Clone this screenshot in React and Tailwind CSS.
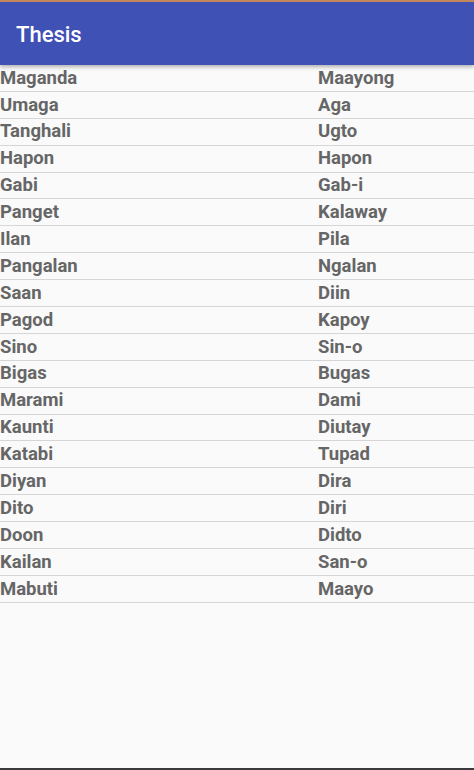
import React from 'react';

const words = [
  ['Maganda', 'Maayong'],
  ['Umaga', 'Aga'],
  ['Tanghali', 'Ugto'],
  ['Hapon', 'Hapon'],
  ['Gabi', 'Gab-i'],
  ['Panget', 'Kalaway'],
  ['Ilan', 'Pila'],
  ['Pangalan', 'Ngalan'],
  ['Saan', 'Diin'],
  ['Pagod', 'Kapoy'],
  ['Sino', 'Sin-o'],
  ['Bigas', 'Bugas'],
  ['Marami', 'Dami'],
  ['Kaunti', 'Diutay'],
  ['Katabi', 'Tupad'],
  ['Diyan', 'Dira'],
  ['Dito', 'Diri'],
  ['Doon', 'Didto'],
  ['Kailan', 'San-o'],
  ['Mabuti', 'Maayo'],
];

const App = () => {
  return (
    <div className="flex flex-col h-[770px] w-[474px] bg-[#fafafa] font-['Roboto',sans-serif] overflow-hidden">
      <div className="h-[2px] bg-[#c88a5c]" />
      <header className="relative z-10 h-[63px] bg-[#3f51b5] flex items-center px-4 pt-[2px] shadow-[0_2px_4px_rgba(0,0,0,0.3)]">
        <h1 className="text-white text-[22px] font-medium">Thesis</h1>
      </header>
      <div className="flex-1 flex flex-col">
        {words.map(([tag, bis]) => (
          <div key={tag} className="h-[26.9px] flex items-center border-b border-[#d6d6d6] text-[#666666] text-[18.5px] font-bold leading-none">
            <span className="w-[318px]">{tag}</span>
            <span>{bis}</span>
          </div>
        ))}
      </div>
      <div className="h-[2px] bg-[#3a3a3a]" />
    </div>
  );
};

export default App;
